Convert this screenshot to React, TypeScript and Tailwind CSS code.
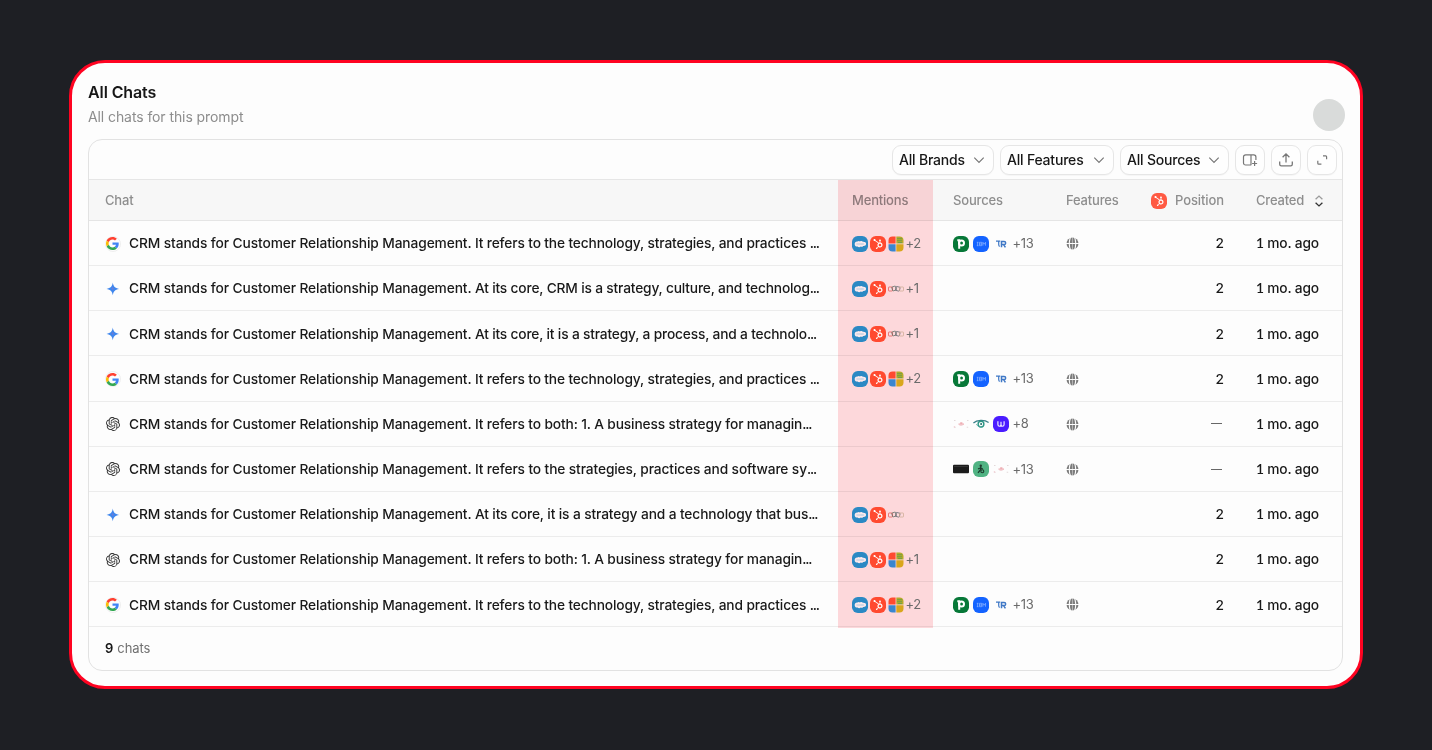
import type { ReactNode } from "react";
import { SiOpenai } from "react-icons/si";
import { FaHubspot } from "react-icons/fa";

function ChevronDown() {
  return (
    <svg viewBox="0 0 12 12" className="size-3 text-[#777]" fill="none" stroke="currentColor" strokeWidth="1.2">
      <path d="M1.3 3.6 6 8.3l4.7-4.7" />
    </svg>
  );
}

function GoogleLogo() {
  return (
    <span className="flex size-4 items-center justify-center rounded-full border border-[#efefef]">
      <svg viewBox="0 0 48 48" className="-ml-px size-[13px] shrink-0">
        <path fill="#FF4131" d="M24 9.5c3.54 0 6.71 1.22 9.21 3.6l6.85-6.85C35.9 2.38 30.47 0 24 0 14.62 0 6.51 5.38 2.56 13.22l7.98 6.19C12.43 13.72 17.74 9.5 24 9.5z" />
        <path fill="#4285F4" d="M46.98 24.55c0-1.57-.15-3.09-.38-4.55H24v9.02h12.94c-.58 2.96-2.26 5.48-4.78 7.18l7.73 6c4.51-4.18 7.09-10.36 7.09-17.65z" />
        <path fill="#FBBC05" d="M10.53 28.59A14.5 14.5 0 0 1 9.77 24c0-1.6.27-3.14.76-4.59l-7.98-6.19A23.93 23.93 0 0 0 0 24c0 3.88.92 7.54 2.56 10.78z" />
        <path fill="#34A853" d="M24 48c6.48 0 11.93-2.13 15.89-5.81l-7.73-6c-2.15 1.45-4.92 2.3-8.16 2.3-6.26 0-11.57-4.22-13.47-9.91l-7.98 6.19C6.51 42.62 14.62 48 24 48z" />
      </svg>
    </span>
  );
}

function GeminiLogo() {
  return (
    <svg viewBox="0 0 16 16" className="size-4">
      <path fill="#3f86ed" d="M7.800 1.600C8.400 5.600 9.900 7.200 14.100 7.900 9.900 8.600 8.400 10.200 7.800 14.200 7.200 10.200 5.700 8.600 1.500 7.900 5.700 7.200 7.200 5.600 7.800 1.600z" />
      <path fill="#8a77c6" opacity=".6" d="M7.400 6 8.900 7.500 7.900 9 6.600 7.700z" />
    </svg>
  );
}

function OpenAiLogo() {
  return (
    <span className="flex size-4 items-center justify-center">
      <SiOpenai className="size-[14px] text-[#333]" />
    </span>
  );
}

function Salesforce() {
  return (
    <svg viewBox="0 0 16 16" className="size-4">
      <rect width="16" height="16" rx="5.800" fill="#2b89c4" />
      <path fill="#fbe9ec" d="M2.700 8.200c-.2-1.700 1.200-3 2.800-2.700.7-.8 1.800-.8 2.500-.1 1-.8 2.200-.6 2.900.3 1.800-.3 3.200.7 3.200 2.100 0 1.500-1.400 2.400-2.900 2.200-.6.900-1.700 1.100-2.500.6-.8 1-2.500.9-3.100-.1-1.600.3-2.900-.8-2.900-2.300z" />
      <path d="M4.600 8h7.200" stroke="#8ebddd" strokeWidth="1" strokeDasharray=".8 .3" />
    </svg>
  );
}

function Hubspot({ color = "bg-[#ff4a30]" }: { color?: string }) {
  return (
    <span className={`flex size-4 items-center justify-center rounded-[5.8px] ${color}`}>
      <FaHubspot className="size-[10px] text-white" />
    </span>
  );
}

function Microsoft() {
  return (
    <svg viewBox="0 0 16 16" className="size-4">
      <path fill="#ff4a30" d="M.5 7.600V4.500a4 4 0 0 1 4-4H7.600v7.100z" />
      <path fill="#b5a928" d="M8.300.5h3.200a4 4 0 0 1 4 4v3.100H8.300z" />
      <path fill="#3a86cf" d="M.5 8.300h7.100v7.200H4.500a4 4 0 0 1-4-4z" />
      <path fill="#d9a61c" d="M8.300 8.300h7.200v3.200a4 4 0 0 1-4 4H8.300z" />
      <path d="M9.500 2.700h4.500M9.500 4.700h4.500M10.500 6.500h3" stroke="#2c9468" strokeWidth="1" strokeDasharray="1 1" />
    </svg>
  );
}

function Zoho() {
  return (
    <svg viewBox="0 0 16 16" className="size-4" fill="none" strokeWidth=".7">
      <rect x=".5" y="6" width="4" height="4" rx=".6" stroke="#e0504c" />
      <rect x="4.100" y="5.500" width="4" height="4" rx=".6" stroke="#56675f" transform="rotate(-18 6.100 7.500)" />
      <rect x="7.800" y="5.800" width="4" height="4" rx=".6" stroke="#58606a" transform="rotate(14 9.800 7.800)" />
      <rect x="11.500" y="6" width="4" height="4" rx=".6" stroke="#c9a98f" />
    </svg>
  );
}

function Pipedrive() {
  return (
    <svg viewBox="0 0 16 16" className="size-4">
      <rect width="16" height="16" rx="5.800" fill="#077838" />
      <path d="M4.300 4.200H6.200V12.800" fill="none" stroke="#fff" strokeWidth="2" />
      <circle cx="8.500" cy="7" r="2.500" fill="none" stroke="#fff" strokeWidth="2" />
    </svg>
  );
}

function Ibm() {
  return (
    <svg viewBox="0 0 16 16" className="size-4">
      <rect width="16" height="16" rx="5.800" fill="#1463ff" />
      <g fill="none" stroke="#a3c2ff" strokeWidth=".6">
        <path d="M3.800 6.300h1.700M3.800 9.700h1.700M4.600 6.300v3.400M6.500 6.300h2.200v3.400H6.500zM6.500 8h2.200M9.900 9.700V6.300l1.300 1.900 1.300-1.900v3.400" />
      </g>
    </svg>
  );
}

function TechRadar() {
  return (
    <svg viewBox="0 0 16 16" className="size-4" fill="none" stroke="#3f78c6" strokeWidth="1.500">
      <path d="M3 5.200h4.200M5.700 5.200v3.200c0 1 .4 1.800 1.100 1.900" strokeWidth="1.200" />
      <path d="M8.500 11.300V5.400h2.600c2.100 0 2.100 3.200 0 3.200H9.200M10.600 8.600l1.800 2.700" />
    </svg>
  );
}

function Faint() {
  return (
    <svg viewBox="0 0 16 16" className="size-4">
      <path fill="#e3d9d9" d="M1 4h1.500v1H1zM14 4h1.500v1H14zM1 11h1.500v1H1zM13.700 10.800h1.500v1h-1.500z" />
      <path fill="#eeaeb4" d="M5.500 7.500h1.700V6.200h2.200v1.300H11v1.200H5.500z" />
      <path fill="#f3d6da" d="M.8 10h1.400v1.700H.8zM6.500 9h3v1h-3z" />
    </svg>
  );
}

function Eye() {
  return (
    <svg viewBox="0 0 16 16" className="size-4" fill="none">
      <path d="M.4 7C3.800 3.700 11.600 3.500 15.600 6.500" stroke="#397f88" strokeWidth="1.200" />
      <circle cx="8" cy="8.100" r="2.900" stroke="#2b9684" strokeWidth="1.400" />
      <circle cx="8.100" cy="8" r="1" fill="#1f6b67" />
      <path d="M3.300 8.200c1.300 2.200 3.300 3.200 6 2.700" stroke="#4aa49a" strokeWidth=".8" />
    </svg>
  );
}

function Violet() {
  return (
    <svg viewBox="0 0 16 16" className="size-4" fill="none">
      <rect width="16" height="16" rx="5.800" fill="#4a1cff" />
      <path d="M4.900 5.300v3.200c0 2.300 3.100 2.300 3.100 0V5.700v2.800c0 2.300 3.100 2.300 3.100 0V5.300" stroke="#ece6ff" strokeWidth="1.200" />
    </svg>
  );
}

function BlackBar() {
  return (
    <svg viewBox="0 0 16 16" className="size-4">
      <rect y="3.800" width="16" height="8.500" rx="1" fill="#1b1b1b" />
      <path d="M1 5.500h14" stroke="#464646" strokeWidth=".6" />
    </svg>
  );
}

function GreenFigure() {
  return (
    <svg viewBox="0 0 16 16" className="size-4" fill="none">
      <rect width="16" height="16" rx="5.800" fill="#50b383" />
      <circle cx="7.800" cy="4.800" r="1.200" fill="#1e3b2e" />
      <path d="M7.700 6v2.500L5 11.800M5 8l2.700-1.300 2 1.300" stroke="#1e3b2e" strokeWidth="1.300" />
      <circle cx="9.300" cy="10.300" r="1.500" stroke="#1e3b2e" strokeWidth="1.100" />
    </svg>
  );
}

function GlobeIcon() {
  return (
    <svg viewBox="0 0 12 12" className="size-[13px]" fill="none">
      <circle cx="6" cy="6" r="5.500" fill="#7d7d7d" />
      <path d="M0 6h12M4.200 0C2.800 3.500 2.800 8.500 4.200 12M7.800 0c1.400 3.500 1.400 8.500 0 12" stroke="#fdfdfd" strokeWidth="1" />
      <path d="M6 0v12" stroke="#fdfdfd" strokeWidth=".4" />
    </svg>
  );
}

const engines = { google: GoogleLogo, gemini: GeminiLogo, openai: OpenAiLogo };

type Row = {
  engine: keyof typeof engines;
  text: string;
  tracking: string;
  mentions?: ReactNode;
  sources?: ReactNode;
  position: string;
};

const mention = (third: ReactNode, more?: string) => (
  <>
    <Salesforce />
    <Hubspot />
    {third}
    {more && <More>{more}</More>}
  </>
);

const vendorSources = (
  <>
    <Pipedrive />
    <Ibm />
    <TechRadar />
    <More>+13</More>
  </>
);

function More({ children }: { children: ReactNode }) {
  return <span className="-ml-[0.5px] text-[13px] tracking-[-0.35px] text-[#6b6b6b]">{children}</span>;
}

const techRow: Row = {
  engine: "google",
  text: "It refers to the technology, strategies, and practices ",
  tracking: "tracking-[-0.142px]",
  mentions: mention(<Microsoft />, "+2"),
  sources: vendorSources,
  position: "2",
};

const rows: Row[] = [
  techRow,
  { engine: "gemini", text: "At its core, CRM is a strategy, culture, and technolog", tracking: "tracking-[-0.17px]", mentions: mention(<Zoho />, "+1"), position: "2" },
  { engine: "gemini", text: "At its core, it is a strategy, a process, and a technolo", tracking: "tracking-[-0.175px]", mentions: mention(<Zoho />, "+1"), position: "2" },
  techRow,
  { engine: "openai", text: "It refers to both: 1. A business strategy for managin", tracking: "tracking-[-0.135px]", sources: <><Faint /><Eye /><Violet /><More>+8</More></>, position: "—" },
  { engine: "openai", text: "It refers to the strategies, practices and software sy", tracking: "tracking-[-0.12px]", sources: <><BlackBar /><GreenFigure /><Faint /><More>+13</More></>, position: "—" },
  { engine: "gemini", text: "At its core, it is a strategy and a technology that bus", tracking: "tracking-[-0.12px]", mentions: mention(<Zoho />), position: "2" },
  { engine: "openai", text: "It refers to both: 1. A business strategy for managin", tracking: "tracking-[-0.135px]", mentions: mention(<Microsoft />, "+1"), position: "2" },
  techRow,
];

const columns = "grid grid-cols-[749px_101px_113px_80px_92px_118px] items-center";

function Select({ label, width }: { label: string; width: string }) {
  return (
    <button className={`flex h-[30px] ${width} items-center justify-between rounded-[9px] border border-[#e6e6e6] bg-[#fefefe] pr-[8px] pl-[6px] text-[14px] font-medium tracking-[-0.2px] text-[#171717] shadow-[0_1px_1px_rgba(0,0,0,0.03)]`}>
      {label}
      <ChevronDown />
    </button>
  );
}

function IconButton({ children }: { children: ReactNode }) {
  return (
    <button className="flex size-[30px] items-center justify-center rounded-[9px] border border-[#e6e6e6] bg-[#fefefe] text-[#777] shadow-[0_1px_1px_rgba(0,0,0,0.03)]">
      {children}
    </button>
  );
}

export default function App() {
  return (
    <main className="h-[750px] w-[1432px] bg-[#1e1f24] pt-[60px] pl-[69px] font-['Inter',sans-serif]">
      <section className="h-[629px] w-[1294px] rounded-[36px] border-[3px] border-[#ff0321] bg-[#fdfdfd] px-4 pt-[18px]">
        <header className="flex h-[58px] justify-between">
          <div>
            <h1 className="text-[16px] leading-[22px] font-semibold tracking-[-0.1px] text-[#171717]">All Chats</h1>
            <p className="mt-1 text-[14px] leading-5 tracking-[-0.09px] text-[#8d8d8d]">All chats for this prompt</p>
          </div>
          <div className="mt-[18px] -mr-px size-8 rounded-full bg-[#d9dbda]" />
        </header>

        <div className="relative h-[532px] w-[1255px] overflow-hidden rounded-[14px] border border-[#e2e2e2]">
          <div className="flex h-10 items-center justify-end gap-[6px] border-b border-[#e6e6e6] pr-[5px]">
            <Select label="All Brands" width="w-[102px]" />
            <Select label="All Features" width="w-[114px]" />
            <Select label="All Sources" width="w-[109px]" />
            <IconButton>
              <svg viewBox="0 0 16 16" className="size-4" fill="none" stroke="currentColor" strokeWidth="1.200">
                <path d="M9.300 13H3.700C2.300 13 1.500 12.200 1.500 10.900V5C1.500 3.700 2.300 2.900 3.700 2.900h8.100c1.300 0 2.100.8 2.100 2.100v3M9 2.900V13M12.600 9v5M10.100 11.500h5" />
              </svg>
            </IconButton>
            <IconButton>
              <svg viewBox="0 0 16 16" className="size-4" fill="none" stroke="currentColor" strokeWidth="1.300">
                <path d="M1.700 9.600v2.700c0 1 .6 1.600 1.600 1.600h9.400c1 0 1.600-.6 1.600-1.600V9.600M8 10.600V2M4.600 5.300 8 1.900l3.400 3.400" />
              </svg>
            </IconButton>
            <IconButton>
              <svg viewBox="0 0 16 16" className="size-4" fill="none" stroke="currentColor" strokeWidth="1.200">
                <path d="M9 3.800h2.700c.6 0 .9.300.9.900v2.600M3.800 8.700v2.600c0 .6.300.9.900.9h2.700" />
              </svg>
            </IconButton>
          </div>

          <div className={`${columns} h-[41px] border-b border-[#e5e5e5] bg-[#f7f7f7] pt-px text-[13px] font-medium tracking-[-0.18px] text-[#8e8e8e]`}>
            <span className="pl-4">Chat</span>
            <span className="pl-[14px]">Mentions</span>
            <span className="pl-[14px]">Sources</span>
            <span className="pl-[14px]">Features</span>
            <span className="flex items-center justify-end gap-2">
              <Hubspot color="bg-[#ff5a43]" />
              <span className="tracking-[-0.1px]">Position</span>
            </span>
            <span className="flex items-center gap-[9px] pl-8">
              Created
              <svg viewBox="0 0 12 12" className="size-3" fill="none" strokeWidth="1.300">
                <path d="M2.600 4.300 6 1.100l3.400 3.200" stroke="#9b9b9b" />
                <path d="M2.600 7.700 6 10.900l3.400-3.200" stroke="#333" />
              </svg>
            </span>
          </div>

          <div>
            {rows.map((row, i) => {
              const Engine = engines[row.engine];
              return (
                <div key={i} className={`${columns} h-[45.17px] border-b border-[#ececec] pt-px text-[14px] font-medium text-[#191919]`}>
                  <div className="flex items-center gap-2 pl-4">
                    <Engine />
                    <span className="text-[13.75px] whitespace-pre">
                      <span className="tracking-[-0.106px]">CRM stands for Customer Relationship Management. </span>
                      <span className={row.tracking}>{row.text}</span>
                      <span className="tracking-[-1.2px]">...</span>
                    </span>
                  </div>
                  <div className="relative z-10 flex items-center gap-[2px] pl-[14px] font-normal">{row.mentions}</div>
                  <div className="flex items-center gap-1 pl-[14px] font-normal">{row.sources}</div>
                  <div className="pl-[14px]">{row.sources && <GlobeIcon />}</div>
                  <div className="flex justify-end text-[13.75px]">
                    {row.position === "—" ? <span className="mr-[2px] -mt-px text-[11px] font-normal text-[#555]">—</span> : row.position}
                  </div>
                  <div className="pl-8 text-[13.75px] tracking-[-0.17px]">
                    <span className="font-['Lato'] font-semibold">1</span> mo. ago
                  </div>
                </div>
              );
            })}
          </div>

          <footer className="flex h-[42px] items-center gap-1 pt-px pl-4 text-[13px] tracking-[-0.05px] text-[#707070]">
            <strong className="font-semibold text-[#171717]">9</strong> chats
          </footer>

          <div className="pointer-events-none absolute top-10 left-[749px] h-[448px] w-[95px] bg-[#ffdadd] mix-blend-multiply" />
        </div>
      </section>
    </main>
  );
}
